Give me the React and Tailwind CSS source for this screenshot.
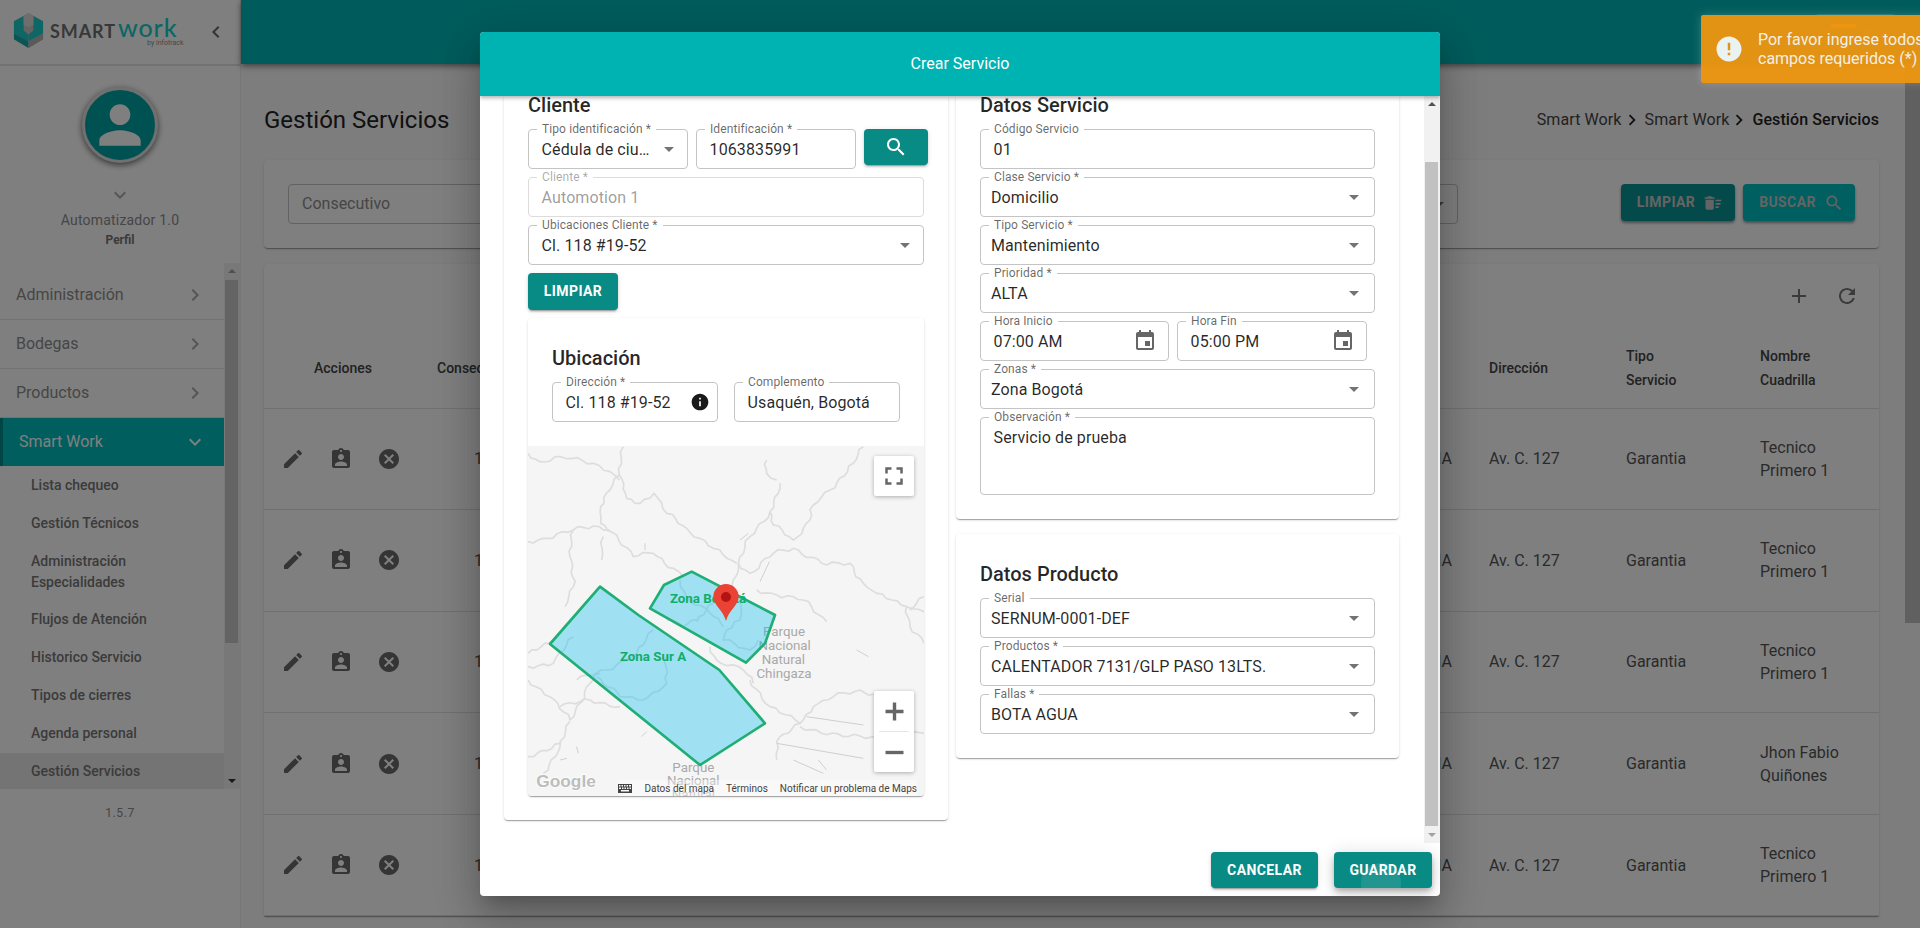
import React from "react";

const P = {
  edit: "M3 17.25V21h3.75L17.81 9.94l-3.75-3.75L3 17.25zM20.71 7.04c.39-.39.39-1.02 0-1.41l-2.34-2.34c-.39-.39-1.02-.39-1.41 0l-1.83 1.83 3.75 3.75 1.83-1.83z",
  assign: "M19 3h-4.18C14.4 1.84 13.3 1 12 1c-1.3 0-2.4.84-2.82 2H5c-1.1 0-2 .9-2 2v14c0 1.1.9 2 2 2h14c1.1 0 2-.9 2-2V5c0-1.1-.9-2-2-2zm-7 0c.55 0 1 .45 1 1s-.45 1-1 1-1-.45-1-1 .45-1 1-1zm0 4c1.66 0 3 1.34 3 3s-1.34 3-3 3-3-1.34-3-3 1.34-3 3-3zm6 12H6v-1.4c0-2 4-3.1 6-3.1s6 1.1 6 3.1V19z",
  cancel: "M12 2C6.47 2 2 6.47 2 12s4.47 10 10 10 10-4.47 10-10S17.53 2 12 2zm5 13.59L15.59 17 12 13.41 8.41 17 7 15.59 10.59 12 7 8.41 8.41 7 12 10.59 15.59 7 17 8.41 13.41 12 17 15.59z",
  search: "M15.5 14h-.79l-.28-.27C15.41 12.59 16 11.11 16 9.5 16 5.91 13.09 3 9.5 3S3 5.91 3 9.5 5.91 16 9.5 16c1.61 0 3.09-.59 4.23-1.57l.27.28v.79l5 4.99L20.49 19l-4.99-5zm-6 0C7.01 14 5 11.99 5 9.5S7.01 5 9.5 5 14 7.01 14 9.5 11.99 14 9.5 14z",
  event: "M17 12h-5v5h5v-5zM16 1v2H8V1H6v2H5c-1.11 0-1.99.9-1.99 2L3 19c0 1.1.89 2 2 2h14c1.1 0 2-.9 2-2V5c0-1.1-.9-2-2-2h-1V1h-2zm3 18H5V8h14v11z",
  info: "M12 2C6.48 2 2 6.48 2 12s4.48 10 10 10 10-4.48 10-10S17.52 2 12 2zm1 15h-2v-6h2v6zm0-8h-2V7h2v2z",
  sweep: "M15 16h4v2h-4zm0-8h7v2h-7zm0 4h6v2h-6zM3 18c0 1.1.9 2 2 2h6c1.1 0 2-.9 2-2V8H3v10zM14 5h-3l-1-1H6L5 5H2v2h12z",
  refresh: "M17.65 6.35C16.2 4.9 14.21 4 12 4c-4.42 0-7.99 3.58-7.99 8s3.57 8 7.99 8c3.73 0 6.84-2.55 7.73-6h-2.08c-.82 2.33-3.04 4-5.65 4-3.31 0-6-2.69-6-6s2.69-6 6-6c1.66 0 3.14.69 4.22 1.78L13 11h7V4l-2.35 2.35z",
  add: "M19 13h-6v6h-2v-6H5v-2h6V5h2v6h6v2z",
  full: "M7 14H5v5h5v-2H7v-3zm-2-4h2V7h3V5H5v5zm12 7h-3v2h5v-5h-2v3zM14 5v2h3v3h2V5h-5z",
  person: "M12 12c2.21 0 4-1.79 4-4s-1.79-4-4-4-4 1.79-4 4 1.79 4 4 4zm0 2c-2.67 0-8 1.34-8 4v2h16v-2c0-2.66-5.33-4-8-4z",
  right: "M10 6L8.59 7.41 13.17 12l-4.58 4.59L10 18l6-6z",
  left: "M15.41 7.41L14 6l-6 6 6 6 1.41-1.41L10.83 12z",
  down: "M16.59 8.59L12 13.17 7.41 8.59 6 10l6 6 6-6z",
  error: "M12 2C6.48 2 2 6.48 2 12s4.48 10 10 10 10-4.48 10-10S17.52 2 12 2zm1 15h-2v-2h2v2zm0-4h-2V7h2v6z",
};

function Ico({ d, size = 24, className = "" }) {
  return (
    <svg viewBox="0 0 24 24" width={size} height={size} className={"shrink-0 fill-current " + className}>
      <path d={d} />
    </svg>
  );
}

function Field({ label, value, select, disabled, inset = 14, arrowClass = "right-[13px]", icon, className = "w-full", tall }) {
  return (
    <div
      className={
        "relative flex border rounded-[4px] bg-white " +
        (tall ? "h-[78px] items-start pt-[9px] " : "h-10 items-center ") +
        (disabled ? "border-[#dcdcdc] " : "border-[#c4c4c4] ") +
        className
      }
    >
      <span
        className={
          "absolute left-[8px] -top-[9px] px-[5px] bg-white text-[12px] leading-[16px] tracking-[0.1px] whitespace-nowrap " +
          (disabled ? "text-black/35" : "text-black/60")
        }
      >
        {label}
      </span>
      <span
        className={
          "text-[16px] leading-[20px] tracking-[0.1px] pt-[1px] truncate " +
          (disabled ? "text-black/40 " : "text-black/85 ") +
          (inset === 12 ? "pl-[10px] " : "pl-[12.6px] ") +
          (select || icon ? "pr-[36px]" : "pr-2")
        }
      >
        {value}
      </span>
      {select && (
        <span className={"absolute top-1/2 -mt-[2px] w-0 h-0 border-l-[5px] border-r-[5px] border-t-[5px] border-l-transparent border-r-transparent border-t-black/55 " + arrowClass} />
      )}
      {icon}
    </div>
  );
}

function TealBtn({ children, className = "" }) {
  return (
    <div className={"flex items-center justify-center rounded-[4px] bg-[#088a85] text-white text-[14px] font-bold tracking-[0.4px] shadow-[0_3px_1px_-2px_rgba(0,0,0,.2),0_2px_2px_0_rgba(0,0,0,.14),0_1px_5px_0_rgba(0,0,0,.12)] " + className}>
      {children}
    </div>
  );
}

const cardShadow = "shadow-[0_2px_1px_-1px_rgba(0,0,0,.2),0_1px_1px_0_rgba(0,0,0,.14),0_1px_3px_0_rgba(0,0,0,.12)]";

const roads = [
  "M340,20 L328,105 L350,175 L390,190 L432,160 L470,220 L530,265 L610,325 L640,345 L680,370",
  "M328,105 L300,150 L272,200 L272,250 L320,285 L370,350 L430,340 L490,385 L520,410",
  "M54,305 L110,295 L190,270 L250,258 L300,270",
  "M190,270 L180,350 L190,440 L165,500",
  "M54,40 L90,65 L150,50 L250,70 L300,95 L328,120",
  "M1060,20 L1030,70 L960,150 L910,195 L900,240 L850,300 L790,255 L780,215 L720,290 L685,370 L670,420 L650,490",
  "M780,215 L810,130",
  "M770,60 L770,100 L800,120",
  "M685,370 L720,400 L790,340 L850,325 L950,375 L1020,370 L1060,430 L1100,460 L1190,500 L1242,515",
  "M740,450 L800,465 L880,480 L950,545",
  "M1190,500 L1200,560 L1242,610",
  "M54,680 L130,670 L190,590",
  "M54,720 L120,770 L180,840 L240,730 L270,700",
  "M240,780 L150,800",
  "M180,845 L150,920 L100,1000",
  "M54,950 L150,910",
  "M720,720 L780,800 L870,850 L910,800 L970,770 L1050,750 L1120,770",
  "M870,850 L800,905 L800,960",
  "M870,860 L1000,890 L1100,890 L1242,880",
  "M600,620 L620,660 L700,690 L730,730",
  "M510,420 L530,470 L600,520 L640,560",
  "M560,540 L520,560 L470,540",
  "M700,470 L690,540 L650,570 L640,600 L720,630 L745,600",
  "M610,490 L560,545",
  "M470,650 L470,730 L400,780 L330,770 L260,710",
  "M430,570 L380,640 L290,690 L200,720",
  "M280,290 L275,360",
  "M1242,470 L1200,510",
  "M240,780 L330,800",
  "M120,610 L54,640",
];
const thin = [
  "M800,910 L1060,955",
  "M890,830 L1060,855",
  "M1040,630 L1075,650",
  "M850,960 L940,1000",
  "M925,960 L950,990",
  "M690,300 L715,280",
  "M750,425 L778,365",
  "M405,310 L405,330",
  "M150,960 L170,955",
  "M200,920 L205,940",
  "M395,890 L410,875",
];

function wiggle(d, amp = 5) {
  const pts = d.replace(/[ML]/g, "").trim().split(/\s+/).map((p) => p.split(",").map(Number));
  let out = `M${pts[0][0]},${pts[0][1]}`;
  let k = 0;
  for (let i = 1; i < pts.length; i++) {
    const [x0, y0] = pts[i - 1];
    const [x1, y1] = pts[i];
    const len = Math.hypot(x1 - x0, y1 - y0);
    const n = Math.max(1, Math.round(len / 16));
    const nx = -(y1 - y0) / (len || 1);
    const ny = (x1 - x0) / (len || 1);
    for (let j = 1; j <= n; j++) {
      k++;
      const t = j / n;
      const o = j === n ? 0 : amp * (Math.sin(k * 1.7) + 0.6 * Math.sin(k * 0.53));
      out += ` L${(x0 + (x1 - x0) * t + nx * o).toFixed(1)},${(y0 + (y1 - y0) * t + ny * o).toFixed(1)}`;
    }
  }
  return out;
}

function MapView() {
  return (
    <div className="relative w-[396px] h-[350px] overflow-hidden">
      <svg viewBox="54 18 1188 1050" width="396" height="350" className="block bg-[#f5f5f5]">
        <g fill="none" stroke="#dddddd" strokeWidth="5" strokeLinejoin="round">
          {roads.map((d, i) => <path key={i} d={wiggle(d)} />)}
        </g>
        <g fill="none" stroke="#cfcfcf" strokeWidth="3">
          {thin.map((d, i) => <path key={i} d={d} />)}
        </g>
        <g fontFamily="Roboto, sans-serif" fontSize="40" fill="#a9a9a9" textAnchor="middle">
          <text x="822" y="588">Parque</text>
          <text x="824" y="630">Nacional</text>
          <text x="820" y="672">Natural</text>
          <text x="822" y="714">Chingaza</text>
          <text x="550" y="996">Parque</text>
          <text x="550" y="1036">Nacional</text>
          <text x="550" y="1076">Natural</text>
        </g>
        <g fill="#00bcf2" fillOpacity="0.35" stroke="#1fae74" strokeWidth="8" strokeLinejoin="round">
          <polygon points="270,440 385,525 628,690 765,850 570,975 120,612" />
          <polygon points="545,395 795,525 765,610 708,668 420,505 462,435" />
        </g>
        <g fontFamily="Roboto, sans-serif" fontSize="40" fontWeight="700" fill="#10ad6a" textAnchor="middle">
          <text x="429" y="663">Zona Sur A</text>
          <text x="594" y="489">Zona Bogotá</text>
        </g>
        <path d="M648,543 C640,510 610,495 610,470 A38,38 0 1 1 686,470 C686,495 656,510 648,543Z" fill="#ea4335" />
        <circle cx="648" cy="471" r="15" fill="#b31412" />
        <text x="168" y="1042" fontFamily="'Liberation Sans', sans-serif" fontSize="52" fontWeight="700" fill="#bdbdbd" stroke="#ffffff" strokeWidth="4" paintOrder="stroke" textAnchor="middle">Google</text>
      </svg>
      <div className="absolute right-[10px] top-[10px] w-10 h-10 bg-white rounded-[2px] flex items-center justify-center shadow-[0_1px_4px_rgba(0,0,0,.3)] text-[#666]">
        <Ico d={P.full} size={30} />
      </div>
      <div className="absolute right-[10px] bottom-[24px] w-10 h-[81px] bg-white rounded-[2px] flex flex-col items-center shadow-[0_1px_4px_rgba(0,0,0,.3)] text-[#666]">
        <div className="h-10 flex items-center justify-center"><Ico d="M10.5 4h3v6.5H20v3h-6.5V20h-3v-6.5H4v-3h6.5z" size={27} /></div>
        <div className="w-[30px] h-px bg-[#e6e6e6]" />
        <div className="h-10 flex items-center justify-center"><Ico d="M4 10.5h16v3H4z" size={27} /></div>
      </div>
      <div className="absolute right-[7px] bottom-0 h-[16px] flex items-center gap-[12px] text-[10px] text-[#444] bg-white/40 whitespace-nowrap">
        <svg width="14" height="9" viewBox="0 0 14 9" className="fill-[#444]"><path d="M0 0h14v9H0zM1 1v1.5h1.5V1zm2.5 0v1.5H5V1zM6 1v1.5h1.5V1zm2.5 0v1.5H10V1zM11 1v1.5h2V1zM1 3.5V5h2V3.5zm3 0V5h1.5V3.5zm2.5 0V5H8V3.5zm2.5 0V5h1.5V3.5zm2.5 0V5H13V3.5zM3 6v1.5h8V6z" fillRule="evenodd" /></svg>
        <span>Datos del mapa</span>
        <span>Términos</span>
        <span>Notificar un problema de Maps</span>
      </div>
    </div>
  );
}

function Heading({ children, className = "" }) {
  return <div className={"text-[20px] leading-[20px] font-medium text-black/85 " + className}>{children}</div>;
}

function Modal() {
  const sel = { select: true, inset: 12, arrowClass: "right-[15px]" };
  return (
    <div className="absolute left-[480px] top-[32px] w-[960px] h-[864px] bg-white rounded-[4px] flex flex-col overflow-hidden shadow-[0_11px_15px_-7px_rgba(0,0,0,.2),0_24px_38px_3px_rgba(0,0,0,.14),0_9px_46px_8px_rgba(0,0,0,.12)]">
      <div className="relative z-10 h-16 shrink-0 bg-[#00b3b3] flex items-center justify-center text-white text-[16px] shadow-[0_2px_4px_rgba(0,0,0,.3)]">
        Crear Servicio
      </div>
      <div className="flex-1 min-h-0 flex">
        <div className="flex-1 pl-6 flex gap-2 items-start">
          <div className={"w-[444px] bg-white rounded-b-[4px] px-6 pb-6 " + cardShadow}>
            <Heading className="h-[33px] -translate-y-px">Cliente</Heading>
            <div className="flex gap-2 mb-2 w-[400px]">
              <Field label="Tipo identificación *" value="Cédula de ciudadanía" select className="w-[160px] shrink-0" />
              <Field label="Identificación *" value="1063835991" className="w-[160px] shrink-0" />
              <TealBtn className="w-16 h-[36px] shrink-0"><Ico d={P.search} size={24} /></TealBtn>
            </div>
            <div className="mb-2"><Field label="Cliente *" value="Automotion 1" disabled /></div>
            <div className="mb-2"><Field label="Ubicaciones Cliente *" value="Cl. 118 #19-52" select /></div>
            <TealBtn className="w-[90px] h-[37px] mb-2">LIMPIAR</TealBtn>
            <div className={"bg-white rounded-[4px] overflow-hidden " + cardShadow}>
              <div className="px-6 pt-[30px] pb-6">
                <Heading className="mb-[14px]">Ubicación</Heading>
                <div className="grid grid-cols-2 gap-4">
                  <Field
                    label="Dirección *"
                    value="Cl. 118 #19-52"
                    icon={<span className="absolute right-[7px] top-[9px] text-[#1a1a1a]"><Ico d={P.info} size={20} /></span>}
                  />
                  <Field label="Complemento" value="Usaquén, Bogotá" />
                </div>
              </div>
              <MapView />
            </div>
          </div>
          <div className="w-[443px] flex flex-col gap-[15px]">
            <div className={"bg-white rounded-b-[4px] px-6 pb-6 " + cardShadow}>
              <Heading className="h-[33px] -translate-y-px">Datos Servicio</Heading>
              <div className="flex flex-col gap-2">
                <Field label="Código Servicio" value="01" />
                <Field label="Clase Servicio *" value="Domicilio" {...sel} />
                <Field label="Tipo Servicio *" value="Mantenimiento" {...sel} />
                <Field label="Prioridad *" value="ALTA" {...sel} />
                <div className="flex gap-2">
                  <Field label="Hora Inicio" value="07:00 AM" className="w-[189px]" icon={<span className="absolute right-[11px] top-[7px] text-[#666]"><Ico d={P.event} /></span>} />
                  <Field label="Hora Fin" value="05:00 PM" className="w-[190px]" icon={<span className="absolute right-[11px] top-[7px] text-[#666]"><Ico d={P.event} /></span>} />
                </div>
                <Field label="Zonas *" value="Zona Bogotá" {...sel} />
                <Field label="Observación *" value="Servicio de prueba" tall />
              </div>
            </div>
            <div className={"bg-white rounded-[4px] px-6 pt-[30px] pb-6 " + cardShadow}>
              <Heading className="mb-[14px]">Datos Producto</Heading>
              <div className="flex flex-col gap-2">
                <Field label="Serial" value="SERNUM-0001-DEF" {...sel} />
                <Field label="Productos *" value="CALENTADOR 7131/GLP PASO 13LTS." {...sel} />
                <Field label="Fallas *" value="BOTA AGUA" {...sel} />
              </div>
            </div>
          </div>
        </div>
        <div className="relative w-4 shrink-0 bg-[#f1f1f1] pt-[66px]">
          <span className="absolute left-[4px] top-[6px] w-0 h-0 border-l-[4px] border-r-[4px] border-b-[4px] border-l-transparent border-r-transparent border-b-[#505050]" />
          <div className="ml-[1px] w-[13px] h-[664px] bg-[#c1c1c1]" />
          <span className="absolute left-[4px] bottom-[6px] w-0 h-0 border-l-[4px] border-r-[4px] border-t-[4px] border-l-transparent border-r-transparent border-t-[#a0a0a0]" />
        </div>
      </div>
      <div className="h-[53px] shrink-0 flex justify-end gap-4 pt-[9px] pr-2">
        <TealBtn className="w-[107px] h-9">CANCELAR</TealBtn>
        <TealBtn className="relative overflow-hidden w-[98px] h-9 shadow-[0_3px_5px_-1px_rgba(0,0,0,.2),0_6px_10px_0_rgba(0,0,0,.14),0_1px_18px_0_rgba(0,0,0,.12)]">
          GUARDAR
          <span className="absolute left-[27px] top-[11px] w-10 h-10 rounded-full bg-white/10" />
        </TealBtn>
      </div>
    </div>
  );
}

function Logo() {
  return (
    <div className="relative h-full w-[190px]">
      <svg viewBox="0 0 34 36" width="33" height="35" className="absolute left-[12px] top-[13px]">
        <polygon points="17,0 32,8.5 32,27 17,36 2,27 2,8.5" fill="#c8c8c8" />
        <polygon points="2,8.5 12,3 12,18 17,22 17,29 2,21" fill="#1ccfca" />
        <polygon points="32,8.5 22,3 22,18 17,22 17,29 32,21" fill="#1ccfca" />
        <polygon points="2,21 17,29 17,36 2,27" fill="#16aaa6" />
        <polygon points="32,21 17,29 17,36 32,27" fill="#b4b4b4" />
        <polygon points="12,3 17,0 22,3 22,12 17,15 12,12" fill="#dcdcdc" />
      </svg>
      <span className="absolute left-[50px] top-[20px] text-[18px] leading-[22px] tracking-[0.9px] font-bold text-[#707070] font-[Lato,sans-serif]">SMART</span>
      <span className="absolute left-[118px] top-[14px] text-[25px] leading-[26px] tracking-[0.9px] font-medium text-[#14cfc8] font-[Lato,sans-serif]">work</span>
      <span className="absolute left-[147px] top-[40px] text-[7px] leading-[7px] text-[#909090]">by infotrack</span>
    </div>
  );
}

function Sidebar() {
  const sub = "flex items-center h-[38px] pl-[31px] text-[14px] font-medium text-[#777]";
  return (
    <aside className="w-[241px] shrink-0 h-full bg-white border-r border-[#ececec] flex flex-col">
      <div className="h-[66px] shrink-0 border-b-2 border-[#e4e4e4] flex items-center relative">
        <Logo />
        <span className="absolute left-[204px] top-[20px] text-[#666]"><Ico d={P.left} /></span>
      </div>
      <div className="flex flex-col items-center">
        <div className="mt-[21px] w-[76px] h-[76px] rounded-full bg-[#00a5a5] border-[3px] border-[#e0e0e0] flex items-center justify-center text-white shadow-[0_2px_6px_rgba(0,0,0,.6)]">
          <Ico d={P.person} size={62} />
        </div>
        <span className="mt-[20px] text-[#aaa]"><Ico d={P.down} size={24} /></span>
        <span className="mt-[3px] text-[14px] leading-[20px] tracking-[0.2px] text-[#8c8c8c]">Automatizador 1.0</span>
        <span className="text-[12px] leading-[20px] font-bold text-[#777]">Perfil</span>
      </div>
      <div className="mt-[13px] h-[526px] flex overflow-hidden shrink-0">
        <div className="w-[224px] pt-[7.5px]">
          {["Administración", "Bodegas", "Productos"].map((t) => (
            <div key={t} className="h-[49px] flex items-center justify-between pl-4 pr-[17px] border-b border-[#e4e4e4] text-[16px] text-[#8c8c8c]">
              {t}
              <span className="text-[#aaa]"><Ico d={P.right} /></span>
            </div>
          ))}
          <div className="h-[48.8px] flex items-center justify-between pl-[16px] pr-[17px] bg-[#00bcbc] border-l-[3px] border-[#008c8c] text-[16px] text-white">
            Smart Work
            <Ico d={P.down} />
          </div>
          <div className={sub}>Lista chequeo</div>
          <div className={sub}>Gestión Técnicos</div>
          <div className="pl-[31px] py-[8.3px] text-[14px] leading-[21px] font-medium text-[#777]">Administración<br />Especialidades</div>
          {["Flujos de Atención", "Historico Servicio", "Tipos de cierres", "Agenda personal"].map((t) => <div key={t} className={sub}>{t}</div>)}
          <div className={sub + " bg-[#e8e8e8]"}>Gestión Servicios</div>
        </div>
        <div className="relative w-4 bg-[#f1f1f1] pt-[17px]">
          <span className="absolute left-[4px] top-[6px] w-0 h-0 border-l-[4px] border-r-[4px] border-b-[4px] border-l-transparent border-r-transparent border-b-[#a0a0a0]" />
          <div className="ml-[1px] w-[13px] h-[363px] bg-[#c8c8c8]" />
          <span className="absolute left-[4px] bottom-[6px] w-0 h-0 border-l-[4px] border-r-[4px] border-t-[4px] border-l-transparent border-r-transparent border-t-[#303030]" />
        </div>
      </div>
      <div className="mt-[15px] text-center text-[12px] leading-[18px] tracking-[0.6px] text-[#8c8c8c]">1.5.7</div>
    </aside>
  );
}

const rows = ["Tecnico Primero 1", "Tecnico Primero 1", "Tecnico Primero 1", "Jhon Fabio Quiñones", "Tecnico Primero 1"];
const cols = "grid grid-cols-[173px_1052px_137px_134px_119px] items-center";

function Main() {
  return (
    <main className="flex-1 min-w-0 h-full flex flex-col">
      <div className="relative h-16 shrink-0 bg-[#00b8b8] shadow-[0_2px_6px_rgba(0,0,0,.5)]" />
      <div className="pl-[23px] pr-[41px] flex-1 min-h-0">
        <div className="flex items-center justify-between h-[96px] pt-[16px]">
          <h1 className="text-[24px] font-normal text-[#222]">Gestión Servicios</h1>
          <div className="flex items-center text-[16px] tracking-[0.1px] text-[#444]">
            Smart Work
            <span className="text-[#222] -ml-[1px] mr-[2px]"><Ico d={P.right} size={22} /></span>
            Smart Work
            <span className="text-[#222] -ml-[1px] mr-[2px]"><Ico d={P.right} size={22} /></span>
            <span className="font-medium text-[#222]">Gestión Servicios</span>
          </div>
        </div>
        <div className={"h-[88px] bg-white rounded-[4px] flex items-start pt-6 pl-6 pr-6 mb-4 " + cardShadow}>
          <div className="relative w-[1170px] h-10 border border-[#c4c4c4] rounded-[4px] flex items-center pl-[13px] text-[16px] text-[#8c8c8c]">
            Consecutivo
            <span className="absolute right-[13px] top-1/2 -mt-[2px] w-0 h-0 border-l-[5px] border-r-[5px] border-t-[5px] border-l-transparent border-r-transparent border-t-[#777]" />
          </div>
          <div className="ml-auto flex gap-2">
            <div className="w-[114px] h-[37px] pl-[4px] rounded-[4px] bg-[#089496] text-[14px] font-bold tracking-[0.4px] text-[#c8c8c8] flex items-center justify-center gap-2 shadow-[0_2px_3px_rgba(0,0,0,.4)]">
              LIMPIAR <Ico d={P.sweep} size={20} />
            </div>
            <div className="w-[112px] h-[37px] pl-[5px] rounded-[4px] bg-[#00bec0] text-[14px] font-bold tracking-[0.4px] text-[#c8c8c8] flex items-center justify-center gap-2 shadow-[0_2px_3px_rgba(0,0,0,.4)]">
              BUSCAR <Ico d={P.search} size={20} />
            </div>
          </div>
        </div>
        <div className={"bg-white rounded-t-[4px] " + cardShadow}>
          <div className="h-[64px] flex items-center justify-end gap-6 pr-[20px] text-[#777]">
            <Ico d={P.add} />
            <Ico d={P.refresh} />
          </div>
          <div className={cols + " h-[80.5px] border-b border-[#e0e0e0] text-[14px] font-medium leading-[24px] text-[#444]"}>
            <div className="pl-[50px]">Acciones</div>
            <div>Consecutivo</div>
            <div>Dirección</div>
            <div>Tipo<br />Servicio</div>
            <div>Nombre<br />Cuadrilla</div>
          </div>
          {rows.map((name, i) => (
            <div key={i} className={cols + " h-[101.6px] border-b border-[#e0e0e0] text-[16px] leading-[23px] text-[#555]"}>
              <div className="pl-[17px] flex gap-6 text-[#6a6a6a]">
                <Ico d={P.edit} />
                <Ico d={P.assign} />
                <Ico d={P.cancel} />
              </div>
              <div className="flex justify-between pl-[37px] pr-[37px]">
                <span>1{i}</span>
                <span>MEDIA</span>
              </div>
              <div>Av. C. 127</div>
              <div>Garantia</div>
              <div className="max-w-[100px]">{name}</div>
            </div>
          ))}
        </div>
      </div>
    </main>
  );
}

function Toast() {
  return (
    <div className="absolute left-[1701px] top-[15px] w-[300px] h-[68px] rounded-[2px] bg-[#ee9610]/95 shadow-[0_0_10px_rgba(255,255,255,.2)] flex items-center pl-[13px] text-[16px] leading-[19.5px] text-[#f3efe6]">
      <span className="text-[#eaf2f2]"><Ico d={P.error} size={30} /></span>
      <div className="ml-[14px] whitespace-nowrap">Por favor ingrese todos los<br />campos requeridos (*)</div>
    </div>
  );
}

export default function App() {
  return (
    <div className="relative w-[1920px] h-[928px] overflow-hidden flex bg-[#fafafa] font-[Roboto,sans-serif]">
      <Sidebar />
      <Main />
      <div className="absolute right-0 top-[64px] bottom-0 w-[15px] bg-[#fafafa]">
        <div className="h-[559px] bg-[#c1c1c1]" />
      </div>
      <div className="absolute inset-0 bg-black/50" />
      <Modal />
      <div className="absolute left-[1815px] top-[14px] w-[81px] h-[36px] rounded-[4px] bg-white/10">
        <span className="absolute left-[16px] top-[10px] w-[25px] h-[4px] bg-[#e8781c]" />
        <span className="absolute left-[48px] top-[16px] w-0 h-0 border-l-[5px] border-r-[5px] border-t-[5px] border-l-transparent border-r-transparent border-t-[#555]" />
      </div>
      <Toast />
    </div>
  );
}
